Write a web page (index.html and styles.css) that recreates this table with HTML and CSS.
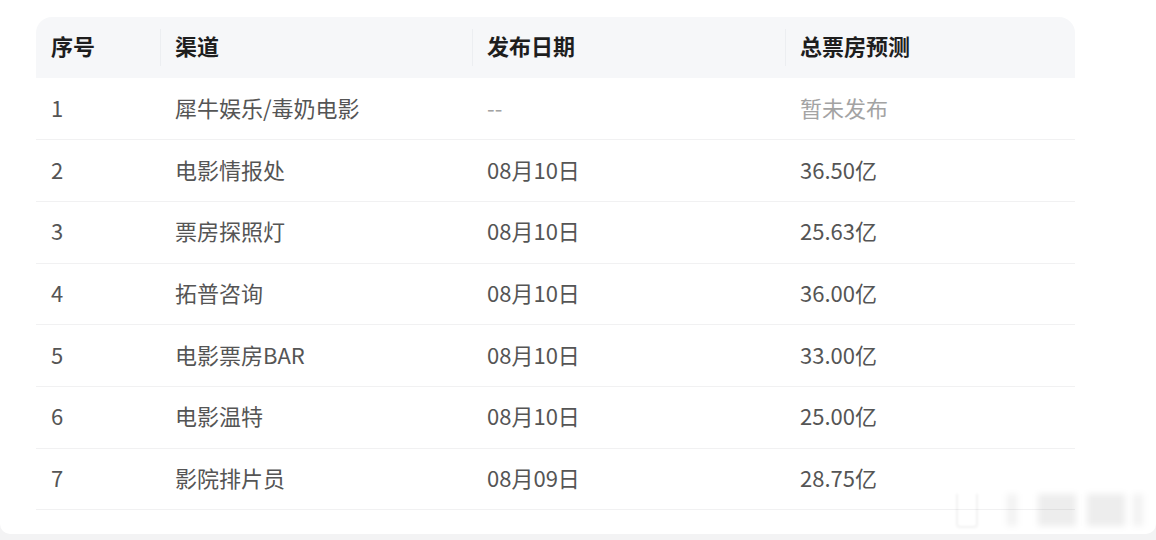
FILE: index.html
```html
<!DOCTYPE html>
<html lang="zh">
<head>
<meta charset="utf-8">
<link rel="stylesheet" href="styles.css">
</head>
<body>
<div class="card">
  <table class="grid">
    <thead>
      <tr>
        <th class="c1">序号</th>
        <th class="c2">渠道</th>
        <th class="c3">发布日期</th>
        <th class="c4">总票房预测</th>
      </tr>
    </thead>
    <tbody>
      <tr><td>1</td><td>犀牛娱乐/毒奶电影</td><td class="muted">--</td><td class="muted">暂未发布</td></tr>
      <tr><td>2</td><td>电影情报处</td><td>08月10日</td><td>36.50亿</td></tr>
      <tr><td>3</td><td>票房探照灯</td><td>08月10日</td><td>25.63亿</td></tr>
      <tr><td>4</td><td>拓普咨询</td><td>08月10日</td><td>36.00亿</td></tr>
      <tr><td>5</td><td>电影票房BAR</td><td>08月10日</td><td>33.00亿</td></tr>
      <tr><td>6</td><td>电影温特</td><td>08月10日</td><td>25.00亿</td></tr>
      <tr><td>7</td><td>影院排片员</td><td>08月09日</td><td>28.75亿</td></tr>
    </tbody>
  </table>
  <div class="mark">
    <span class="m m1"></span><span class="m m2"></span><span class="m m3"></span><span class="m m4"></span><span class="m m5"></span>
  </div>
</div>
<div class="band"></div>
</body>
</html>
```

FILE: styles.css
```css
html, body {
  margin: 0;
  padding: 0;
  background: #f3f3f4;
}
body {
  width: 1156px;
  height: 540px;
  overflow: hidden;
  font-family: "Noto Sans CJK SC", "Noto Sans", sans-serif;
}
.card {
  position: relative;
  background: #ffffff;
  height: 534px;
  box-sizing: border-box;
  padding: 17px 0 0 36px;
  border-radius: 0 0 10px 10px;
}
.grid {
  width: 1039px;
  border-collapse: collapse;
  table-layout: fixed;
}
.c1 { width: 124px; }
.c2 { width: 312px; }
.c3 { width: 313px; }
.c4 { width: 290px; }
th {
  position: relative;
  height: 61px;
  box-sizing: border-box;
  padding: 0 15px 5px;
  background: #f6f7f9;
  color: #1e1e1e;
  font-size: 22px;
  font-weight: 700;
  text-align: left;
}
th.c1 { border-top-left-radius: 16px; }
th.c4 { border-top-right-radius: 16px; }
th + th::before {
  content: "";
  position: absolute;
  left: 0;
  top: 12px;
  bottom: 12px;
  width: 1px;
  background: #eceef1;
}
td {
  height: 61.7px;
  box-sizing: border-box;
  padding: 0 15px 4px;
  border-bottom: 1px solid #f1f1f2;
  color: #555555;
  font-size: 22px;
  font-weight: 400;
  text-align: left;
}
td.muted { color: #a3a3a3; }
.mark {
  position: absolute;
  left: 950px;
  top: 488px;
  width: 200px;
  height: 42px;
}
.m {
  position: absolute;
  top: 6px;
  height: 32px;
  background: rgba(0, 0, 0, 0.05);
  filter: blur(3px);
}
.m1 { left: 6px; width: 18px; background: transparent; border: 2px solid rgba(0,0,0,0.05); border-top: none; border-radius: 0 0 4px 4px; filter: blur(1px); }
.m2 { left: 57px; width: 10px; }
.m3 { left: 88px; width: 38px; background: rgba(0,0,0,0.07); }
.m4 { left: 137px; width: 38px; background: rgba(0,0,0,0.07); }
.m5 { left: 183px; width: 10px; }
.band {
  height: 6px;
}
```
